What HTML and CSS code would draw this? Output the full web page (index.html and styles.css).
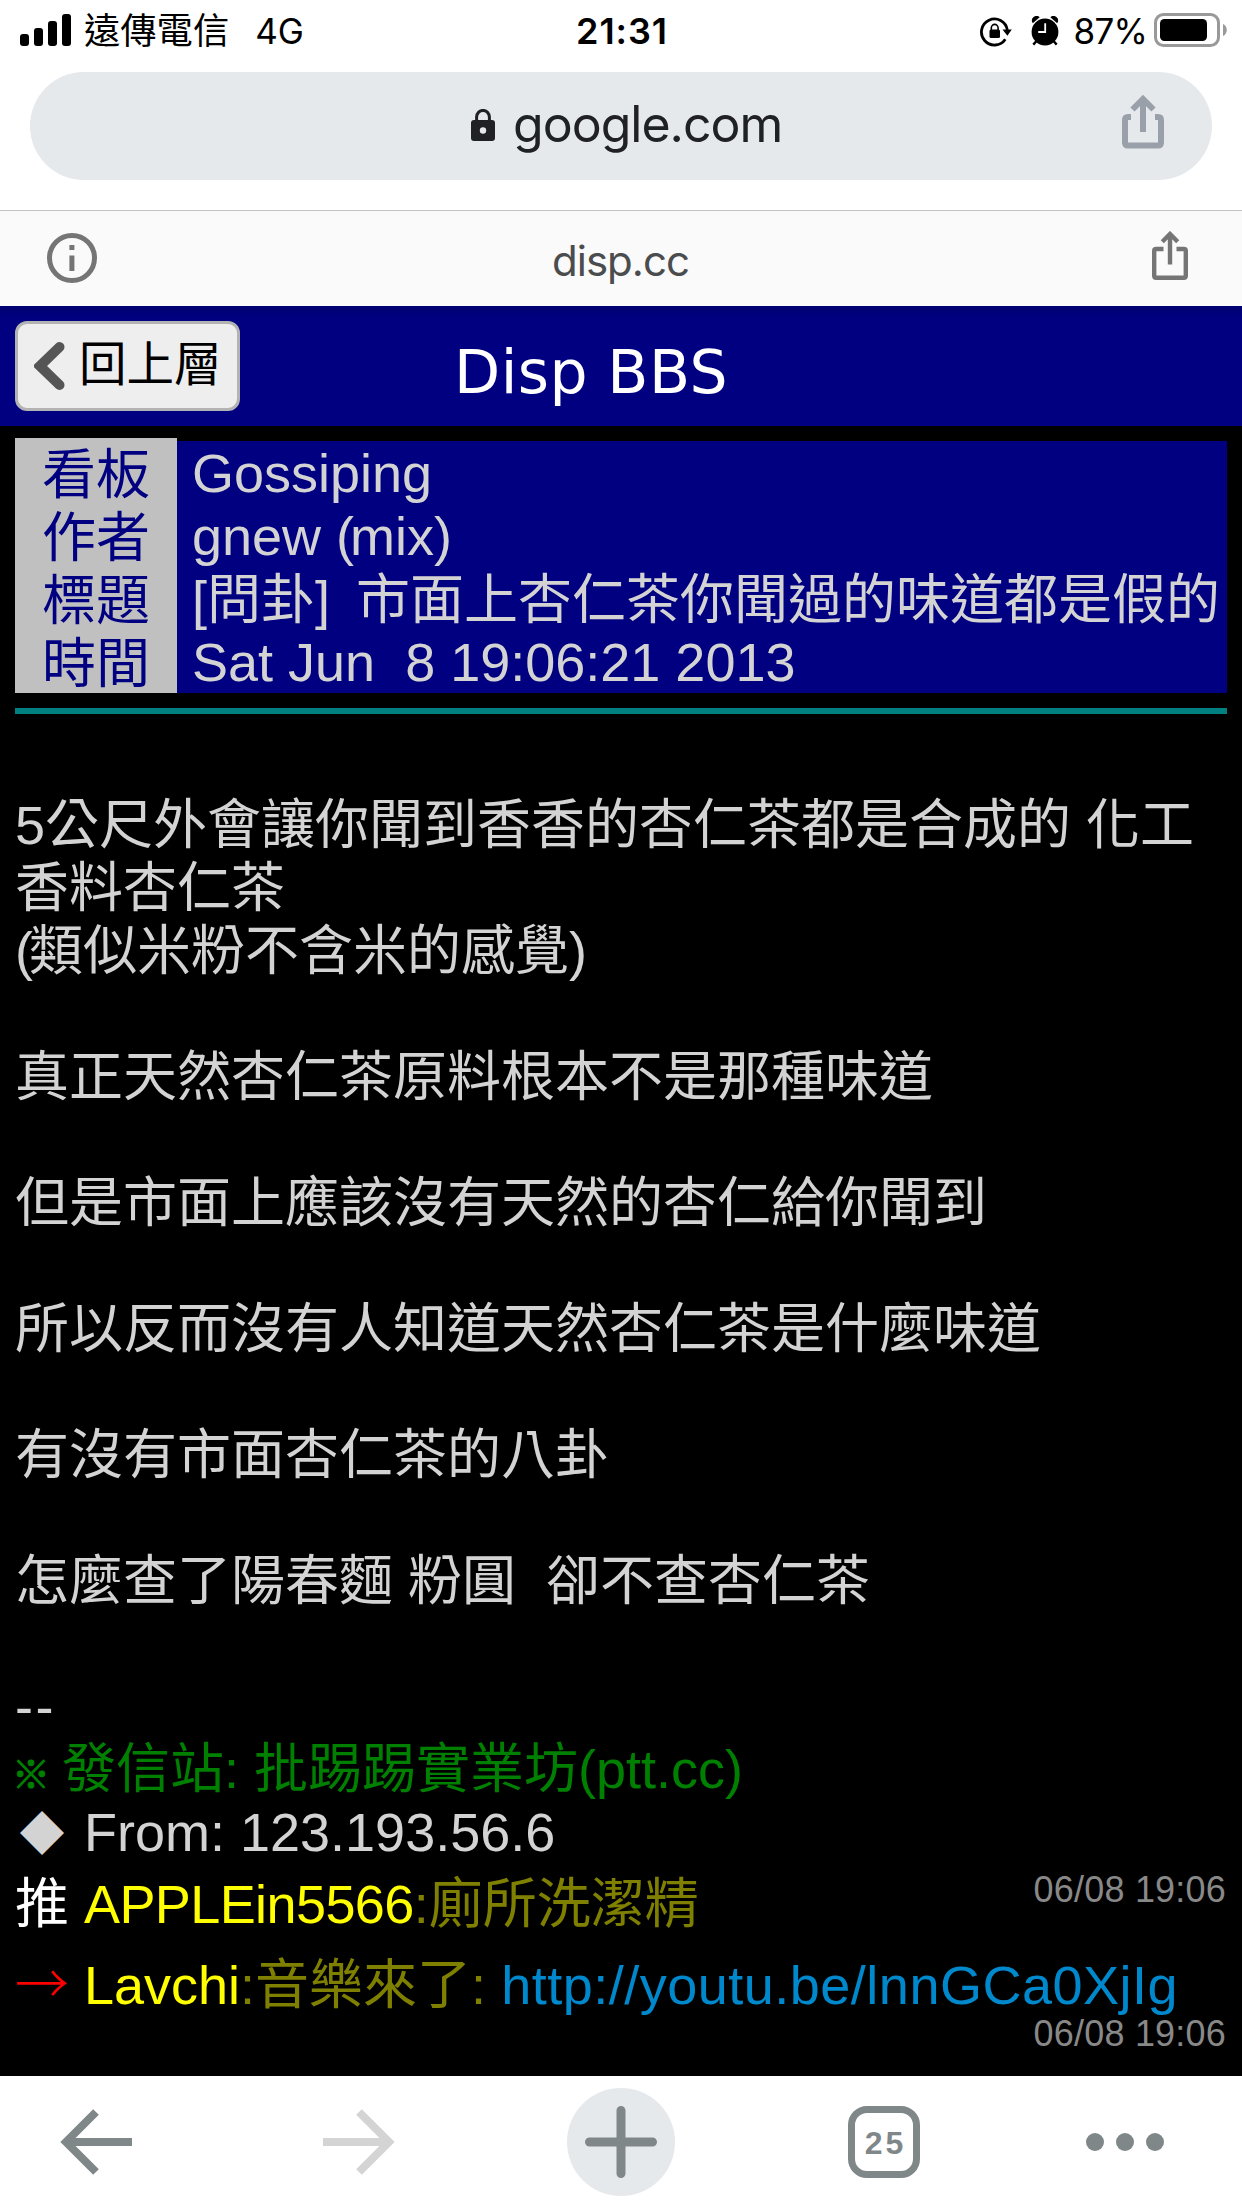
FILE: index.html
```html
<!DOCTYPE html>
<html lang="zh-Hant">
<head>
<meta charset="utf-8">
<title>Disp BBS</title>
<link rel="stylesheet" href="styles.css">
</head>
<body>
<div class="screen">
  <header class="status">
    <div class="status-left">
      <svg class="signal" width="52" height="32" viewBox="0 0 52 32"><rect x="0" y="20" width="9" height="12" rx="3"/><rect x="14" y="14" width="9" height="18" rx="3"/><rect x="28" y="7" width="9" height="25" rx="3"/><rect x="42" y="0" width="9" height="32" rx="3"/></svg>
      <span class="carrier">遠傳電信</span>
      <span class="network">4G</span>
    </div>
    <div class="clock">21:31</div>
    <div class="status-right">
      <svg class="rotation" width="32" height="30" viewBox="0 0 32 30"><path d="M25.3 22.2A13 13 0 1 1 27.3 13" fill="none" stroke="#000" stroke-width="2.8"/><path d="M22.5 12.5h9.3l-4.4 6.3z"/><rect x="9.5" y="12.5" width="10.5" height="8.5" rx="1.5"/><path d="M11.3 13v-2a3.4 3.6 0 0 1 6.8 0v2" fill="none" stroke="#000" stroke-width="1.6"/></svg>
      <svg class="alarm" width="28" height="30" viewBox="0 0 28 30"><circle cx="14" cy="16" r="13.4"/><path d="M1.8 7.2A4.6 4.6 0 0 1 8.7 1.2zM26.2 7.2A4.6 4.6 0 0 0 19.3 1.2z"/><path d="M5.5 25l-3.2 3.6M22.5 25l3.2 3.6" stroke="#000" stroke-width="2.4"/><path d="M14.2 7.2v8.8h-7" fill="none" stroke="#fff" stroke-width="1.8"/></svg>
      <span class="percent">87%</span>
      <svg class="battery" width="74" height="34" viewBox="0 0 74 34"><rect x="1.5" y="1.5" width="63" height="31" rx="8" fill="none" stroke="#999" stroke-width="3"/><rect x="6" y="6" width="47" height="22" rx="4.5"/><path d="M69 11c5 2 5 10 0 12z" fill="#999"/></svg>
    </div>
  </header>

  <div class="address-bar">
    <div class="omnibox">
      <svg class="lock" width="24" height="32" viewBox="0 0 24 32"><rect x="0" y="11" width="24" height="21" rx="3"/><path d="M5.6 12V8a6.4 6.6 0 0 1 12.8 0v4" fill="none" stroke="#202124" stroke-width="3"/><circle cx="12" cy="21.5" r="3.2" fill="#e6e9ec"/></svg>
      <span class="host">google.com</span>
      <svg class="share-large" width="42" height="54" viewBox="0 0 42 54"><path d="M9 22H6q-3 0-3 3v22.5q0 3 3 3h30q3 0 3-3V25q0-3-3-3h-3" stroke-width="6"/><path d="M21 37V5M10.5 14.5L21 4l10.5 10.5" stroke-width="6"/></svg>
    </div>
  </div>

  <div class="viewer-bar">
    <svg class="info" width="50" height="50" viewBox="0 0 50 50"><circle cx="25" cy="25" r="22.5" fill="none" stroke="#757575" stroke-width="5"/><path d="M22.4 12h5v5h-5zM22.4 22.5h5V38h-5z"/></svg>
    <span class="source">disp.cc</span>
    <svg class="share-small" width="36" height="49" viewBox="0 0 36 49"><path d="M11.5 18H4.2q-2 0-2 2v24.7q0 2 2 2h27.6q2 0 2-2V20q0-2-2-2h-7.3" stroke-width="4.4"/><path d="M18 33.5V4M10.3 10.7L18 3l7.7 7.7" stroke-width="4.4"/></svg>
  </div>

  <main class="page">
    <div class="title-bar">
      <div class="back-button">
        <svg width="31" height="58" viewBox="0 0 31 58"><path d="M25.5 10L6 29l19.5 19" fill="none" stroke="#555" stroke-width="10" stroke-linecap="round"/></svg>
        <span>回上層</span>
      </div>
      <h1 class="title">Disp BBS</h1>
    </div>

    <dl class="meta">
      <dt>看板</dt><dd>Gossiping</dd>
      <dt>作者</dt><dd>gnew <span class="tight">(</span>mix)</dd>
      <dt>標題</dt><dd class="subject">[問卦<span class="tight">]</span>  市面上杏仁茶你聞過的味道都是假的</dd>
      <dt>時間</dt><dd>Sat Jun  8 19:06:21 2013</dd>
    </dl>

    <article class="post">
<p>5公尺外會讓你聞到香香的杏仁茶都是合成的 化工
香料杏仁茶
<span class="tight">(</span>類似米粉不含米的感覺)</p>
<p>真正天然杏仁茶原料根本不是那種味道</p>
<p>但是市面上應該沒有天然的杏仁給你聞到</p>
<p>所以反而沒有人知道天然杏仁茶是什麼味道</p>
<p>有沒有市面杏仁茶的八卦</p>
<p>怎麼查了陽春麵 粉圓  卻不查杏仁茶</p>
<p class="signature"><span class="dashes">--</span>
<span class="station"><span class="mark">※</span> 發信站: 批踢踢實業坊(ptt.cc)</span>
<span class="diamond">◆</span> From: 123.193.56.6</p>
    </article>

    <section class="pushes">
      <div class="push"><div class="push-text"><span class="tag-up">推</span> <span class="user user-caps">APPLEin5566</span><span class="comment">:廁所洗潔精</span></div><time>06/08 19:06</time></div>
      <div class="push"><div class="push-text"><span class="tag-arrow">→</span> <span class="user">Lavchi</span><span class="comment">:音樂來了: </span><a class="link">http://youtu.be/lnnGCa0XjIg</a></div><time>06/08 19:06</time></div>
    </section>
  </main>

  <nav class="toolbar">
    <div class="tool"><svg width="72" height="66" viewBox="0 0 72 66"><path d="M72 33H7M36 3L6 33l30 30" fill="none" stroke="#7f8789" stroke-width="8"/></svg></div>
    <div class="tool"><svg width="72" height="66" viewBox="0 0 72 66"><path d="M0 33H65M36 3L66 33 36 63" fill="none" stroke="#d4d4d4" stroke-width="8"/></svg></div>
    <div class="tool"><div class="new-tab"><svg width="72" height="72" viewBox="0 0 72 72"><path d="M36 4.5v63M4.5 36h63" stroke="#7f8789" stroke-width="9" stroke-linecap="round"/></svg></div></div>
    <div class="tool"><div class="tab-count">25</div></div>
    <div class="tool"><svg width="78" height="18" viewBox="0 0 78 18" fill="#7f8789"><circle cx="9" cy="9" r="9"/><circle cx="39" cy="9" r="9"/><circle cx="69" cy="9" r="9"/></svg></div>
  </nav>
</div>
</body>
</html>
```
FILE: styles.css
```css
* { box-sizing: border-box; }
body { margin: 0; background: #fff; }
svg { display: block; flex: none; }

.screen {
  width: 1242px;
  height: 2208px;
  display: flex;
  flex-direction: column;
  overflow: hidden;
  font-family: Inter, "Noto Sans CJK TC", sans-serif;
}

.status {
  height: 60px;
  display: grid;
  grid-template-columns: 1fr auto 1fr;
  padding: 0 14px 0 20px;
  font-size: 35px;
  line-height: 62px;
}
.status-left, .status-right { display: flex; }
.status-right { justify-content: flex-end; }
.signal { margin-top: 14px; }
.carrier { margin-left: 12px; font-size: 36.3px; }
.network { margin-left: 26px; }
.clock { font-size: 36px; font-weight: 600; letter-spacing: 0.9px; margin-right: 4px; }
.rotation { margin-top: 17px; }
.alarm { margin: 16px 0 0 19px; }
.percent { margin-left: 15px; letter-spacing: -0.8px; }
.battery { margin: 13px 0 0 7px; }

.address-bar { height: 151px; padding: 12px 30px 0; border-bottom: 1px solid #c4c4c4; }
.omnibox {
  height: 108px;
  border-radius: 54px;
  background: #e6e9ec;
  display: flex;
  align-items: center;
  padding: 0 48px 0 441px;
  color: #202124;
}
.lock { fill: #202124; margin-top: -2px; }
.host { margin: -4px auto 0 18px; font-size: 50px; letter-spacing: -1px; }
.share-large { fill: none; stroke: #9aa0a9; margin-top: -8px; }

.viewer-bar {
  height: 95px;
  background: #fafafa;
  display: flex;
  align-items: center;
  justify-content: space-between;
  padding: 0 54px 0 47px;
  color: #4a4c4e;
}
.info { fill: #757575; margin-top: -2px; }
.source { font-size: 42px; margin: 3px 8px 0 0; letter-spacing: -1px; }
.share-small { fill: none; stroke: #757575; margin-top: -6px; }

.page {
  flex: 1;
  background: #000;
  color: #d3d3d3;
  font: 54px/63px "Liberation Sans", "Noto Sans CJK TC", sans-serif;
  overflow: hidden;
}

.title-bar {
  height: 120px;
  display: flex;
  padding: 15px 300px 0 15px;
  background: linear-gradient(#000070, #000080 12px);
}
.back-button {
  width: 225px;
  height: 90px;
  display: flex;
  align-items: center;
  padding: 0 0 0 16px;
  border: 3px solid #b3b3b3;
  border-radius: 12px;
  background: #eee;
  color: #000;
  font-size: 47.5px;
}
.back-button span { margin: -3px 0 0 14px; white-space: nowrap; }
.title {
  flex: 1;
  margin: 0;
  text-align: center;
  color: #fff;
  font: 400 60px/102px "DejaVu Sans", sans-serif;
  letter-spacing: 0.4px;
}

.tight { margin-right: -4px; }

.meta {
  display: grid;
  grid-template-columns: 162px 1fr;
  grid-auto-rows: 63px;
  margin: 12px 15px 15px;
  padding-top: 3px;
  background: linear-gradient(#c0c0c0, #c0c0c0) 0 0 / 162px 3px no-repeat;
}
.meta dt { background: #c0c0c0; color: #000080; text-align: center; line-height: 68px; }
.meta dd { margin: 0; padding-left: 15px; background: #000080; white-space: pre; line-height: 65px; }
.meta .subject { line-height: 67px; }

.post {
  margin: 0 15px;
  padding-top: 80px;
  border-top: 6px solid #008080;
}
.post p { margin: 0 0 63px; white-space: pre; }
.post .signature { margin: -1px 0 -1px; }
.dashes { letter-spacing: 2.5px; }
.station { color: #008000; }
.mark {
  display: inline-block;
  width: 32px;
  font-size: 38px;
  line-height: 38px;
  text-indent: -3px;
  -webkit-text-stroke: 1px;
}
.diamond {
  display: inline-block;
  width: 54px;
  text-align: center;
  font-size: 45px;
  font-family: "Noto Sans CJK TC", sans-serif;
  line-height: 45px;
}

.push { display: flex; flex-wrap: wrap; padding: 9px 15px; }
.push-text { height: 63px; min-width: 1000px; white-space: pre; line-height: 65px; }
.push time { margin: 0 1px 0 auto; color: #888; font-size: 36px; line-height: 36px; letter-spacing: 0.2px; }
.tag-up { color: #fff; }
.tag-arrow { color: #f00; font-family: "Noto Sans CJK TC", sans-serif; font-weight: 300; line-height: 54px; }
.user { color: #ff0; }
.user-caps { letter-spacing: -0.6px; }
.comment { color: #808000; }
.link { color: #08c; letter-spacing: 0.5px; }

.toolbar {
  height: 132px;
  display: grid;
  grid-template-columns: 192px 334px 190px 336px 150px;
  background: #fff;
}
.tool { display: flex; align-items: center; justify-content: center; }
.tool:last-child { padding-right: 4px; }
.new-tab {
  width: 108px;
  height: 108px;
  border-radius: 50%;
  background: #e6e9ec;
  display: grid;
  place-items: center;
}
.tab-count {
  width: 72px;
  height: 72px;
  border: 7px solid #7f8789;
  border-radius: 19px;
  color: #7f8789;
  text-align: center;
  font: 700 32px/60px "Liberation Sans", sans-serif;
  letter-spacing: 3px;
  padding-left: 3px;
}
```
